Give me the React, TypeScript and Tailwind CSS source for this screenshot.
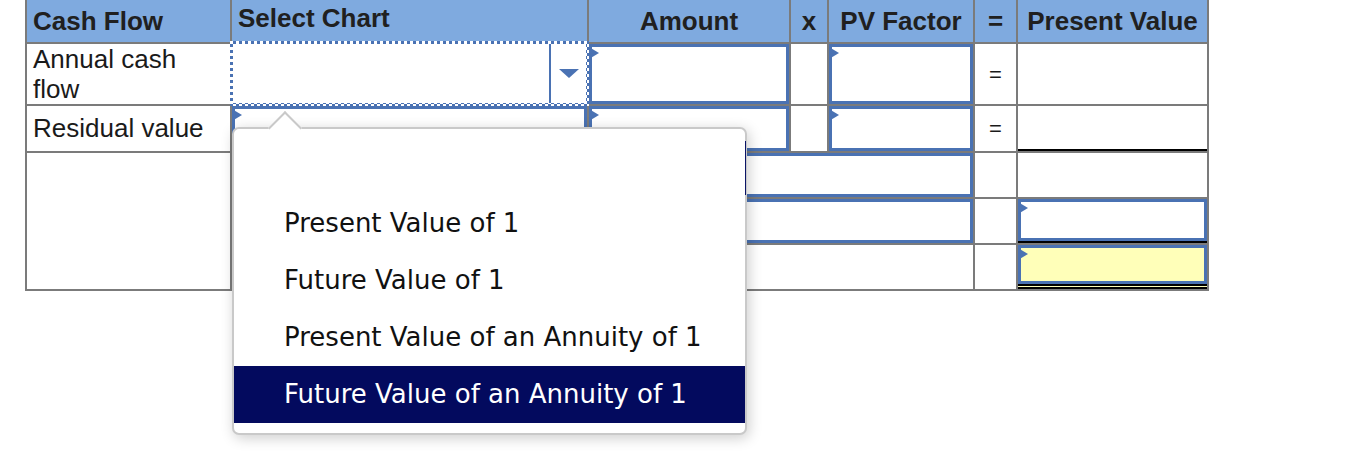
import clsx from 'clsx'

const CHART_OPTIONS = [
  'Present Value of 1',
  'Future Value of 1',
  'Present Value of an Annuity of 1',
  'Future Value of an Annuity of 1',
]

function Entry({ tint = false }: { tint?: boolean }) {
  return (
    <div
      className={clsx(
        'relative h-full border-[3px] border-[#4a72b3]',
        tint ? 'bg-[#ffffb9]' : 'bg-white',
      )}
    >
      <span className="absolute -left-[3px] top-0 h-0 w-0 border-y-[6px] border-l-[10px] border-y-transparent border-l-[#4a72b3]" />
    </div>
  )
}

function HeadCell({ children, align = 'center' }: { children: React.ReactNode; align?: 'left' | 'center' | 'top' }) {
  return (
    <div
      className={clsx(
        'flex bg-[#7faadf] text-[26px] font-bold leading-[30px] text-[#202020]',
        align === 'center' && 'items-center justify-center',
        align === 'left' && 'items-center pl-[6px]',
        align === 'top' && 'items-start pl-[6px] pt-[3px]',
      )}
    >
      {children}
    </div>
  )
}

function ChartSelect() {
  return (
    <div className="-mx-[2px] -my-[3px] h-[65px] bg-[repeating-conic-gradient(#4a72b3_0_25%,#fff_0_50%)] bg-[length:6px_6px] p-[3px]">
      <div className="flex h-full bg-white">
        <div className="flex-1" />
        <div className="flex w-[37px] items-center justify-center border-l-2 border-[#4a72b3]">
          <span className="h-0 w-0 border-x-[10px] border-t-[9px] border-x-transparent border-t-[#4a72b3]" />
        </div>
      </div>
    </div>
  )
}

function ChartMenu() {
  return (
    <div className="absolute left-[232px] top-[127px] h-[308px] w-[515px] rounded-[7px] border-2 border-[#c9c9c9] bg-white pt-[66px] font-['DejaVu_Sans',sans-serif] text-[26px] text-[#111] shadow-[2px_3px_14px_rgba(0,0,0,0.2)]">
      <span className="absolute -top-[13px] left-[39px] h-6 w-6 rotate-45 border-l-2 border-t-2 border-[#c9c9c9] bg-white" />
      <span className="absolute -right-[1px] top-[12px] h-[54px] w-[1px] bg-[#0b1466]" />
      {CHART_OPTIONS.map((option, i) => (
        <div
          key={option}
          className={clsx(
            'flex h-[57px] items-center pl-[50px]',
            i === CHART_OPTIONS.length - 1 && 'bg-[#030a5e] text-white',
          )}
        >
          {option}
        </div>
      ))}
    </div>
  )
}

export default function App() {
  return (
    <div className="relative min-h-screen w-full bg-white font-['Liberation_Sans',Arial,sans-serif]">
      <div className="ml-[25px] grid w-[1184px] grid-cols-[203px_355px_200px_36px_144px_41px_189px] grid-rows-[42px_60px_45px_44px_44px_44px] gap-[2px] bg-[#7b7b7b] px-[2px] pb-[2px] text-[26px] text-[#1a1a1a]">
        <HeadCell align="left">Cash Flow</HeadCell>
        <HeadCell align="top">Select Chart</HeadCell>
        <HeadCell>Amount</HeadCell>
        <HeadCell>x</HeadCell>
        <HeadCell>PV Factor</HeadCell>
        <HeadCell>=</HeadCell>
        <HeadCell>Present Value</HeadCell>

        {/* annual cash flow */}
        <div className="bg-white pl-[6px] leading-[30px]">
          Annual cash
          <br />
          flow
        </div>
        <div className="bg-white">
          <ChartSelect />
        </div>
        <div className="bg-white">
          <Entry />
        </div>
        <div className="bg-white" />
        <div className="bg-white">
          <Entry />
        </div>
        <div className="flex items-center justify-center bg-white text-[22px]">=</div>
        <div className="bg-white" />

        {/* residual value */}
        <div className="flex items-center bg-white pl-[6px]">Residual value</div>
        <div className="bg-white">
          <Entry />
        </div>
        <div className="bg-white">
          <Entry />
        </div>
        <div className="bg-white" />
        <div className="bg-white">
          <Entry />
        </div>
        <div className="flex items-center justify-center bg-white text-[22px]">=</div>
        <div className="border-b-2 border-black bg-white" />

        {/* totals */}
        <div className="row-span-3 bg-white" />
        <div className="bg-white">
          <Entry />
        </div>
        <div className="col-span-3 bg-white">
          <Entry />
        </div>
        <div className="bg-white" />
        <div className="bg-white" />

        <div className="bg-white">
          <Entry />
        </div>
        <div className="col-span-3 bg-white">
          <Entry />
        </div>
        <div className="bg-white" />
        <div className="border-b-2 border-black bg-white">
          <Entry />
        </div>

        <div className="bg-white" />
        <div className="col-span-3 bg-white" />
        <div className="bg-white" />
        <div className="border-b-[5px] border-double border-black bg-[#ffffb9]">
          <Entry tint />
        </div>
      </div>

      <ChartMenu />
    </div>
  )
}
